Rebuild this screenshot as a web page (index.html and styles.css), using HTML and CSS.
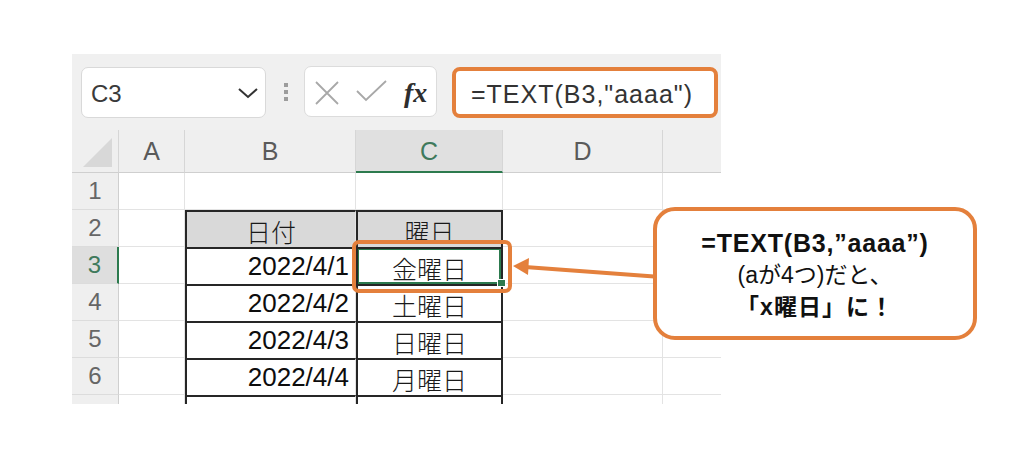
FILE: index.html
```html
<!DOCTYPE html>
<html lang="ja">
<head>
<meta charset="utf-8">
<link rel="stylesheet" href="styles.css">
</head>
<body>
<div class="stage">
  <div class="sheet">
    <div class="fbar">
      <div class="namebox">
        <span class="nametext">C3</span>
        <svg class="chev" width="20" height="12" viewBox="0 0 20 12"><polyline points="1,2 10,10 19,2" fill="none" stroke="#333" stroke-width="2"/></svg>
      </div>
      <div class="dots"><i></i><i></i><i></i></div>
      <div class="btns">
        <svg class="ico-x" width="24" height="24" viewBox="0 0 24 24"><path d="M1 1 L23 23 M23 1 L1 23" stroke="#a8a8a8" stroke-width="1.8" fill="none"/></svg>
        <svg class="ico-check" width="31" height="22" viewBox="0 0 31 22"><polyline points="1,11 10,20 30,1" fill="none" stroke="#a8a8a8" stroke-width="1.8"/></svg>
        <span class="fx">fx</span>
      </div>
      <div class="formula">=TEXT(B3,"aaaa")</div>
    </div>
    <div class="grid">
      <div class="c h corner"><span class="tri"></span></div>
      <div class="c h">A</div>
      <div class="c h">B</div>
      <div class="c h hsel">C</div>
      <div class="c h">D</div>
      <div class="c h hlast"></div>

      <div class="c rh">1</div>
      <div class="c"></div><div class="c"></div><div class="c"></div><div class="c"></div><div class="c last"></div>

      <div class="c rh">2</div>
      <div class="c"></div>
      <div class="c t th jp">日付</div>
      <div class="c t tc th jp">曜日</div>
      <div class="c"></div><div class="c last"></div>

      <div class="c rh rsel">3</div>
      <div class="c"></div>
      <div class="c t date">2022/4/1</div>
      <div class="c t tc jp sel">金曜日<span class="selbox"></span><span class="handle"></span><span class="hl"></span></div>
      <div class="c"></div><div class="c last"></div>

      <div class="c rh">4</div>
      <div class="c"></div>
      <div class="c t date">2022/4/2</div>
      <div class="c t tc jp">土曜日</div>
      <div class="c"></div><div class="c last"></div>

      <div class="c rh">5</div>
      <div class="c"></div>
      <div class="c t date">2022/4/3</div>
      <div class="c t tc jp">日曜日</div>
      <div class="c"></div><div class="c last"></div>

      <div class="c rh">6</div>
      <div class="c"></div>
      <div class="c t date">2022/4/4</div>
      <div class="c t tc jp">月曜日</div>
      <div class="c"></div><div class="c last"></div>

      <div class="c rh r7">7</div>
      <div class="c"></div>
      <div class="c t"></div>
      <div class="c t tc jp r7">火曜日</div>
      <div class="c"></div><div class="c last"></div>
    </div>
  </div>

  <svg class="arrow" width="160" height="34" viewBox="0 0 160 34">
    <line x1="14" y1="12" x2="150" y2="22" stroke="#e4803c" stroke-width="4"/>
    <polygon points="2,11 18,3 17,20" fill="#e4803c"/>
  </svg>

  <div class="callout">
    <div class="l1">=TEXT(B3,”aaaa”)</div>
    <div class="l2">(aが4つ)だと、</div>
    <div class="l3">「x曜日」に！</div>
  </div>
</div>
</body>
</html>
```

FILE: styles.css
```css
html, body {
  margin: 0;
  padding: 0;
  background: #ffffff;
}

.stage {
  position: relative;
  width: 1024px;
  height: 471px;
  overflow: hidden;
  font-family: "Liberation Sans", "Noto Sans CJK JP", sans-serif;
}

.sheet {
  margin: 54px 0 0 72px;
  width: 649px;
  height: 350px;
  overflow: hidden;
  background: #f0f0f0;
}

/* ---------- formula bar ---------- */
.fbar {
  height: 76px;
  box-sizing: border-box;
  display: flex;
  align-items: flex-start;
  padding: 13px 0 0 9px;
}

.namebox {
  width: 185px;
  height: 51px;
  box-sizing: border-box;
  background: #fff;
  border: 1px solid #d9d9d9;
  border-radius: 7px;
  display: flex;
  align-items: center;
  padding: 0 7px 0 9px;
}

.nametext {
  flex: 1;
  font-size: 24px;
  color: #3a3a3a;
  padding-top: 3px;
}

.chev {
  display: block;
}

.dots {
  margin: 16px 0 0 18px;
  width: 5px;
  display: flex;
  flex-direction: column;
  gap: 3px;
}

.dots i {
  display: block;
  width: 4px;
  height: 4px;
  background: #9c9c9c;
}

.btns {
  margin: -1px 0 0 15px;
  width: 133px;
  height: 51px;
  box-sizing: border-box;
  background: #fff;
  border: 1px solid #dcdcdc;
  border-radius: 7px;
  display: flex;
  align-items: center;
  padding-left: 10px;
}

.ico-x {
  display: block;
  margin-top: 2px;
}

.ico-check {
  display: block;
  margin-left: 17px;
  margin-top: -2px;
}

.fx {
  margin-left: 17px;
  font-family: "Liberation Serif", serif;
  font-style: italic;
  font-weight: bold;
  font-size: 28px;
  color: #2e2e2e;
  padding-top: 2px;
}

.formula {
  margin-left: 15px;
  width: 266px;
  height: 51px;
  box-sizing: border-box;
  background: #fff;
  border: 4px solid #e4803c;
  border-radius: 8px;
  display: flex;
  align-items: center;
  padding: 3px 0 0 15px;
  font-size: 25px;
  letter-spacing: 1px;
  color: #333;
}

/* ---------- grid ---------- */
.grid {
  display: grid;
  grid-template-columns: 47px 66px 171px 147px 160px 58px;
  grid-template-rows: 43px repeat(7, 37px);
  height: 274px;
  overflow: hidden;
  background: #fff;
}

.c {
  box-sizing: border-box;
  border-right: 1px solid #e3e3e3;
  border-bottom: 1px solid #e3e3e3;
  display: flex;
  align-items: center;
  justify-content: center;
  font-size: 24px;
  color: #111;
  min-width: 0;
}

.c.last {
  border-right: 0;
}

.h {
  background: #efefef;
  border-right: 1px solid #d6d6d6;
  border-bottom: 1px solid #cfcfcf;
  color: #5a5a5a;
  font-size: 25px;
  padding-top: 1px;
}

.h.hlast {
  border-right: 0;
}

.h.hsel {
  background: #e0e0e0;
  border-bottom: 2px solid #2c7a4e;
  color: #3f7a5c;
}

.corner {
  justify-content: flex-end;
  align-items: flex-end;
  padding: 0 6px 5px 0;
}

.tri {
  display: block;
  width: 0;
  height: 0;
  border-left: 29px solid transparent;
  border-bottom: 29px solid #d8d8d8;
}

.rh {
  background: #efefef;
  border-right: 1px solid #cfcfcf;
  border-bottom: 1px solid #dcdcdc;
  color: #666;
  font-size: 24px;
}

.rh.rsel {
  background: #dedede;
  border-right: 2px solid #2c7a4e;
  color: #3f7a5c;
}

.t {
  border-top: 2px solid #262626;
  border-left: 2px solid #262626;
  border-bottom: 0;
}

.tc {
  border-right: 2px solid #262626;
}

.th {
  background: #d9d9d9;
}

.jp {
  font-family: "Noto Sans CJK JP", sans-serif;
  font-weight: 300;
  font-size: 25px;
  color: #1a1a1a;
  padding-top: 2px;
}

.date {
  justify-content: flex-end;
  padding-right: 6px;
  font-size: 26px;
  color: #0d0d0d;
}

.r7 {
  padding-top: 10px;
}

.sel {
  position: relative;
}

.selbox {
  position: absolute;
  inset: 0;
  border: 2px solid #2c7a4e;
  border-top-width: 1px;
  border-left-width: 1px;
}

.handle {
  position: absolute;
  right: -5px;
  bottom: -3px;
  width: 7px;
  height: 6px;
  background: #2c7a4e;
  border: 1px solid #fff;
}

.hl {
  position: absolute;
  left: -6px;
  top: -9px;
  width: 160px;
  height: 53px;
  box-sizing: border-box;
  border: 4px solid #e4803c;
  border-radius: 7px;
  z-index: 2;
}

/* ---------- callout ---------- */
.arrow {
  position: absolute;
  left: 511px;
  top: 255px;
}

.callout {
  position: absolute;
  left: 653px;
  top: 207px;
  width: 324px;
  height: 133px;
  box-sizing: border-box;
  border: 4px solid #e4803c;
  border-radius: 22px;
  background: #fff;
  display: flex;
  flex-direction: column;
  align-items: center;
  justify-content: center;
  color: #111;
  line-height: 32px;
  padding-top: 3px;
}

.l1 {
  font-weight: bold;
  font-size: 25px;
  letter-spacing: 0.8px;
}

.l2 {
  font-size: 23px;
}

.l3 {
  font-weight: bold;
  font-size: 23px;
  letter-spacing: 1px;
}
```
